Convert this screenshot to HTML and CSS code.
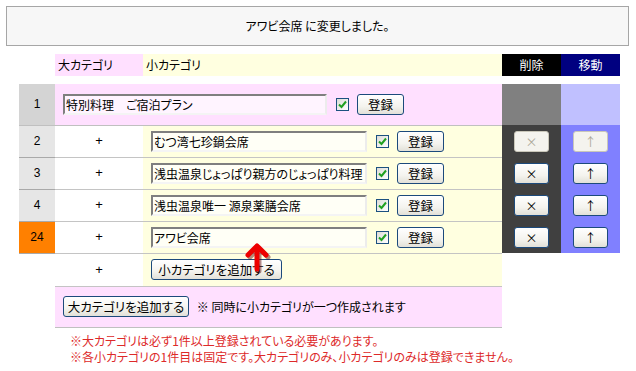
FILE: index.html
```html
<!DOCTYPE html>
<html lang="ja">
<head>
    <meta charset="UTF-8">
    <title>カテゴリ管理</title>
    <link rel="stylesheet" href="styles.css">
</head>
<body>
    <div class="notice">アワビ会席 に変更しました。</div>

    <div class="board">
        <table class="cats">
            <colgroup>
                <col class="c-no"><col class="c-big"><col class="c-sub"><col class="c-del"><col class="c-move">
            </colgroup>
            <tr class="head">
                <td></td>
                <td class="h-big">大カテゴリ</td>
                <td class="h-sub">小カテゴリ</td>
                <td class="h-del">削除</td>
                <td class="h-move">移動</td>
            </tr>
            <tr class="gap"><td colspan="5"></td></tr>

            <tr class="row-big">
                <td class="no no-big">1</td>
                <td colspan="2" class="big-cell">
                    <div class="field">
                        <input class="text text-big" type="text" value="特別料理　ご宿泊プラン">
                        <span class="check"><svg viewBox="0 0 13 13" width="13" height="13"><path d="M3 6.5 L5.5 9 L10 3.5" fill="none" stroke="#21a121" stroke-width="2"/></svg></span>
                        <button class="btn">登録</button>
                    </div>
                </td>
                <td class="del del-big"></td>
                <td class="move move-big"></td>
            </tr>

            <tr class="row-sub">
                <td class="no">2</td>
                <td class="plus">+</td>
                <td class="sub-cell">
                    <div class="field">
                        <input class="text" type="text" value="むつ湾七珍鍋会席">
                        <span class="check"><svg viewBox="0 0 13 13" width="13" height="13"><path d="M3 6.5 L5.5 9 L10 3.5" fill="none" stroke="#21a121" stroke-width="2"/></svg></span>
                        <button class="btn">登録</button>
                    </div>
                </td>
                <td class="del"><button class="btn btn-small" disabled>×</button></td>
                <td class="move"><button class="btn btn-small" disabled>↑</button></td>
            </tr>

            <tr class="row-sub">
                <td class="no">3</td>
                <td class="plus">+</td>
                <td class="sub-cell">
                    <div class="field">
                        <input class="text" type="text" value="浅虫温泉じょっぱり親方のじょっぱり料理">
                        <span class="check"><svg viewBox="0 0 13 13" width="13" height="13"><path d="M3 6.5 L5.5 9 L10 3.5" fill="none" stroke="#21a121" stroke-width="2"/></svg></span>
                        <button class="btn">登録</button>
                    </div>
                </td>
                <td class="del"><button class="btn btn-small">×</button></td>
                <td class="move"><button class="btn btn-small">↑</button></td>
            </tr>

            <tr class="row-sub">
                <td class="no">4</td>
                <td class="plus">+</td>
                <td class="sub-cell">
                    <div class="field">
                        <input class="text" type="text" value="浅虫温泉唯一 源泉薬膳会席">
                        <span class="check"><svg viewBox="0 0 13 13" width="13" height="13"><path d="M3 6.5 L5.5 9 L10 3.5" fill="none" stroke="#21a121" stroke-width="2"/></svg></span>
                        <button class="btn">登録</button>
                    </div>
                </td>
                <td class="del"><button class="btn btn-small">×</button></td>
                <td class="move"><button class="btn btn-small">↑</button></td>
            </tr>

            <tr class="row-sub">
                <td class="no no-current">24</td>
                <td class="plus">+</td>
                <td class="sub-cell">
                    <div class="field">
                        <input class="text" type="text" value="アワビ会席">
                        <span class="check"><svg viewBox="0 0 13 13" width="13" height="13"><path d="M3 6.5 L5.5 9 L10 3.5" fill="none" stroke="#21a121" stroke-width="2"/></svg></span>
                        <button class="btn">登録</button>
                    </div>
                </td>
                <td class="del"><button class="btn btn-small">×</button></td>
                <td class="move"><button class="btn btn-small">↑</button></td>
            </tr>

            <tr class="row-add">
                <td class="blank"></td>
                <td class="plus">+</td>
                <td class="sub-cell"><button class="btn btn-add-sub">小カテゴリを追加する</button></td>
                <td></td>
                <td></td>
            </tr>

            <tr class="row-add-big">
                <td></td>
                <td colspan="2" class="big-add">
                    <button class="btn btn-add-big">大カテゴリを追加する</button>
                    <span class="hint">※ 同時に小カテゴリが一つ作成されます</span>
                </td>
                <td></td>
                <td></td>
            </tr>
        </table>

        <!-- annotation arrow over the new entry -->
        <svg class="pointer" width="30" height="34" viewBox="0 0 30 34">
            <path d="M5 13 L14 4 L23 13 M14 4 V27" fill="none" stroke="#5a0000" stroke-opacity="0.45" stroke-width="5" stroke-linecap="round" stroke-linejoin="round" transform="translate(2,2)"/>
            <path d="M5 13 L14 4 L23 13 M14 4 V27" fill="none" stroke="#ee0000" stroke-width="5" stroke-linecap="round" stroke-linejoin="round"/>
        </svg>
    </div>

    <p class="notes">
        ※大カテゴリは必ず1件以上登録されている必要があります。<br>
        ※各小カテゴリの1件目は固定です。大カテゴリのみ、小カテゴリのみは登録できません。
    </p>
</body>
</html>
```

FILE: styles.css
```css
* {
    margin: 0;
    padding: 0;
    box-sizing: border-box;
}

body {
    font-family: "Noto Sans CJK JP", "DejaVu Sans", sans-serif;
    font-size: 12px;
    line-height: 16px;
    font-feature-settings: "palt";
    color: #000;
    background: #fff;
}

.notice {
    margin: 6px 7px 0 6px;
    height: 40px;
    border: 1px solid #a6a6a6;
    background: #f7f7f7;
    text-align: center;
    line-height: 38px;
}

.board {
    position: relative;
    margin: 8px 0 0 19px;
    width: 601px;
}

.cats {
    border-collapse: collapse;
    table-layout: fixed;
    width: 601px;
}

.c-no { width: 36px; }
.c-big { width: 88px; }
.c-sub { width: 359px; }
.c-del { width: 59px; }
.c-move { width: 59px; }

.cats td {
    padding: 0;
    vertical-align: middle;
}

.head td {
    height: 22px;
    padding-left: 3px;
}

.h-big { background: #ffe0ff; }
.h-sub { background: #ffffe0; }

.h-del,
.h-move {
    color: #fff;
    text-align: center;
    padding-left: 0 !important;
}

.h-del { background: #000; }
.h-move { background: #000080; }

.gap td { height: 8px; }

.row-big td {
    height: 41px;
}

.no {
    text-align: center;
    background: #e6e6e6;
    border-bottom: 1px solid #a9a9a9;
    font-family: "Liberation Sans", sans-serif;
}

.no-big {
    background: #d4d4d4;
    border-bottom-color: #c0c0c0;
}

.no-current { background: #ff8000; }

.big-cell {
    background: #ffe0ff;
    padding-left: 8px !important;
    border-bottom: 1px solid #c0c0c0;
}

.plus,
.sub-cell {
    border-bottom: 1px solid #c4c4c4;
}

.plus {
    text-align: center;
    font-family: "Liberation Sans", sans-serif;
    font-size: 13px;
}

.sub-cell {
    background: #ffffe0;
    padding-left: 8px !important;
}

.del {
    background: #404040;
    text-align: center;
}

.move {
    background: #8080ff;
    text-align: center;
}

.del.del-big { background: #808080; }
.move.move-big { background: #c0c0ff; }

.row-sub td {
    height: 32px;
}

.row-add td { height: 33px; }

.field {
    display: flex;
    align-items: center;
}

.text {
    width: 216px;
    height: 21px;
    border: 2px solid;
    border-color: #7f7f7f #ececec #f4f4f4 #7f7f7f;
    background: #fffff6;
    font-family: "Noto Sans CJK JP", sans-serif;
    font-size: 12px;
    font-feature-settings: "palt";
    padding: 0 0 0 1px;
    color: #000;
}

.text-big {
    width: 264px;
    background: #fff4ff;
}

.check {
    display: inline-block;
    width: 13px;
    height: 13px;
    margin-left: 9px;
    border: 1px solid #1c5180;
    background: linear-gradient(135deg, #dcdcd7, #fff);
}

.check svg {
    display: block;
    margin: -1px;
}

.btn {
    font-family: "Noto Sans CJK JP", sans-serif;
    font-size: 12.5px;
    font-feature-settings: "palt";
    line-height: 17px;
    height: 21px;
    border: 1px solid #1c4a7c;
    border-radius: 3px;
    background: linear-gradient(#ffffff, #f4f3ee 60%, #e2e0d8);
    color: #000;
    padding: 0;
    white-space: nowrap;
}

.field .btn {
    width: 47px;
    margin-left: 8px;
}

.btn-small {
    width: 35px;
    font-size: 12px;
}

.btn:disabled {
    border-color: #c9c7ba;
    background: #f4f3ee;
    color: #aca899;
}

.btn-add-sub { width: 131px; }

.row-add-big td { height: 41px; }

.big-add {
    background: #ffe0ff;
    padding-left: 8px !important;
    border-bottom: 1px solid #c0c0c0;
}

.btn-add-big { width: 126px; }

.hint {
    margin-left: 5px;
    font-size: 12px;
}

.pointer {
    position: absolute;
    left: 224px;
    top: 188px;
}

.notes {
    margin: 5px 0 0 70px;
    color: #dd2a2a;
    line-height: 16px;
}
```
